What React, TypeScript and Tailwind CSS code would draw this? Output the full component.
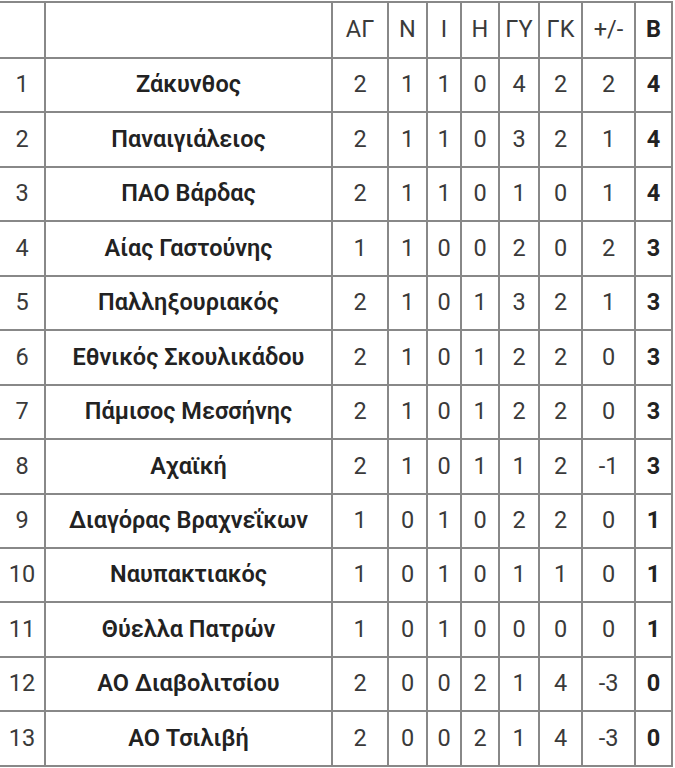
import React from "react";

const rows: [string, number[], number][] = [
  ["Ζάκυνθος", [2, 1, 1, 0, 4, 2, 2], 4],
  ["Παναιγιάλειος", [2, 1, 1, 0, 3, 2, 1], 4],
  ["ΠΑΟ Βάρδας", [2, 1, 1, 0, 1, 0, 1], 4],
  ["Αίας Γαστούνης", [1, 1, 0, 0, 2, 0, 2], 3],
  ["Παλληξουριακός", [2, 1, 0, 1, 3, 2, 1], 3],
  ["Εθνικός Σκουλικάδου", [2, 1, 0, 1, 2, 2, 0], 3],
  ["Πάμισος Μεσσήνης", [2, 1, 0, 1, 2, 2, 0], 3],
  ["Αχαϊκή", [2, 1, 0, 1, 1, 2, -1], 3],
  ["Διαγόρας Βραχνεΐκων", [1, 0, 1, 0, 2, 2, 0], 1],
  ["Ναυπακτιακός", [1, 0, 1, 0, 1, 1, 0], 1],
  ["Θύελλα Πατρών", [1, 0, 1, 0, 0, 0, 0], 1],
  ["ΑΟ Διαβολιτσίου", [2, 0, 0, 2, 1, 4, -3], 0],
  ["ΑΟ Τσιλιβή", [2, 0, 0, 2, 1, 4, -3], 0],
];

const headers = ["ΑΓ", "N", "Ι", "Η", "ΓΥ", "ΓΚ", "+/-"];

const cell =
  "flex items-center justify-center border-r-2 border-b-2 border-[#888888]";

export default function App() {
  return (
    <div
      className="w-[675px] h-[768px] bg-white overflow-hidden pt-[1px]"
      style={{ fontFamily: "Roboto, 'Noto Sans', sans-serif" }}
    >
      <div className="grid grid-cols-[46px_287px_56px_39px_34px_38px_40px_43px_53px_37px] w-[673px] border-t-2 border-[#888888] text-[23.5px] leading-none">
        <div className={`${cell} h-[56px]`}></div>
        <div className={`${cell} h-[56px]`}></div>
        {headers.map((h) => (
          <div key={h} className={`${cell} h-[56px] text-[#3a3a3a]`}>
            {h}
          </div>
        ))}
        <div className={`${cell} h-[56px] font-bold text-[#222]`}>B</div>
        {rows.map(([name, nums, pts], i) => (
          <React.Fragment key={name}>
            <div className={`${cell} h-[54.45px] text-[#3a3a3a]`}>{i + 1}</div>
            <div className={`${cell} h-[54.45px] font-semibold text-[#222]`}>{name}</div>
            {nums.map((n, j) => (
              <div key={j} className={`${cell} h-[54.45px] text-[#3a3a3a]`}>
                {n}
              </div>
            ))}
            <div className={`${cell} h-[54.45px] font-bold text-[#222]`}>{pts}</div>
          </React.Fragment>
        ))}
      </div>
    </div>
  );
}
